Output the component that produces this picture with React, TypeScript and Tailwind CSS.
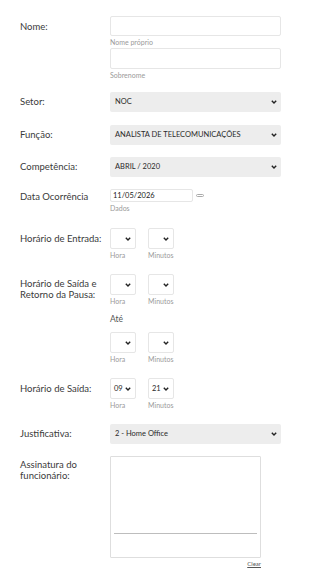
import React from "react";

const Chevron = () => (
  <svg width="6" height="4" viewBox="0 0 6 4" className="shrink-0">
    <path d="M0.8 0.8 L3 3 L5.2 0.8" fill="none" stroke="#222" strokeWidth="1.4" />
  </svg>
);

const Label = ({ children, pt = "pt-[5px]" }: { children: React.ReactNode; pt?: string }) => (
  <div className={`w-[110px] shrink-0 pl-[20px] pr-[6px] text-[9.5px] leading-[11px] text-[#3a3a3a] ${pt}`}>{children}</div>
);

const Caption = ({ children, className = "" }: { children: React.ReactNode; className?: string }) => (
  <div className={`text-[7px] leading-[10px] text-[#9a9a9a] ${className}`}>{children}</div>
);

const WideSelect = ({ value }: { value: string }) => (
  <div className="flex h-[20px] w-[171px] items-center justify-between rounded-[2px] bg-[#ededed] pl-[5px] pr-[4px] text-[7.5px] text-[#2a2a2a]">
    <span>{value}</span>
    <Chevron />
  </div>
);

const TimeSelect = ({ value = "" }: { value?: string }) => (
  <div className="flex h-[21px] w-[26px] items-center justify-between rounded-[2px] border border-[#e6e6e6] bg-white pl-[3px] pr-[4px] text-[7.5px] text-[#2a2a2a]">
    <span>{value}</span>
    <Chevron />
  </div>
);

const TimePair = ({ h = "", m = "" }: { h?: string; m?: string }) => (
  <div className="flex gap-[12px]">
    <div className="w-[26px]">
      <TimeSelect value={h} />
      <Caption className="mt-[1px]">Hora</Caption>
    </div>
    <div className="w-[26px]">
      <TimeSelect value={m} />
      <Caption className="mt-[1px]">Minutos</Caption>
    </div>
  </div>
);

export default function App() {
  return (
    <div className="min-h-[578px] w-[310px] bg-white pt-[16px]" style={{ fontFamily: "Lato, 'Noto Sans', sans-serif" }}>
      {/* Nome */}
      <div className="flex">
        <Label>Nome:</Label>
        <div className="w-[171px]">
          <div className="h-[20px] rounded-[2px] border border-[#e6e6e6]" />
          <Caption className="mt-[1px]">Nome próprio</Caption>
          <div className="mt-[1px] h-[21px] rounded-[2px] border border-[#e6e6e6]" />
          <Caption className="mt-[1px]">Sobrenome</Caption>
        </div>
      </div>

      {/* Setor */}
      <div className="mt-[12px] flex">
        <Label pt="pt-[4px]">Setor:</Label>
        <WideSelect value="NOC" />
      </div>
      <div className="mt-[13px] flex">
        <Label pt="pt-[4px]">Função:</Label>
        <WideSelect value="ANALISTA DE TELECOMUNICAÇÕES" />
      </div>
      <div className="mt-[12px] flex">
        <Label pt="pt-[4px]">Competência:</Label>
        <WideSelect value="ABRIL / 2020" />
      </div>

      {/* Data */}
      <div className="mt-[12px] flex">
        <Label pt="pt-[2px]">Data Ocorrência</Label>
        <div>
          <div className="flex items-center gap-[3px]">
            <div className="flex h-[13px] w-[83px] items-center rounded-[2px] border border-[#e6e6e6] pl-[2px] text-[7.5px] text-[#222]">
              11/05/2026
            </div>
            <div className="h-[3px] w-[8px] rounded-full border border-[#aaa]" />
          </div>
          <Caption className="mt-[1px]">Dados</Caption>
        </div>
      </div>

      {/* Entrada */}
      <div className="mt-[15px] flex">
        <Label pt="pt-[5px]">Horário de Entrada:</Label>
        <TimePair />
      </div>

      {/* Saída e Retorno */}
      <div className="mt-[14px] flex">
        <Label pt="pt-[4px]">Horário de Saída e Retorno da Pausa:</Label>
        <div>
          <TimePair />
          <div className="mt-[8px] text-[8.5px] leading-[10px] text-[#555]">Até</div>
          <div className="mt-[8px]">
            <TimePair />
          </div>
        </div>
      </div>

      {/* Saída */}
      <div className="mt-[14px] flex">
        <Label pt="pt-[5px]">Horário de Saída:</Label>
        <TimePair h="09" m="21" />
      </div>

      {/* Justificativa */}
      <div className="mt-[14px] flex">
        <Label pt="pt-[4px]">Justificativa:</Label>
        <WideSelect value="2 - Home Office" />
      </div>

      {/* Assinatura */}
      <div className="mt-[12px] flex">
        <Label pt="pt-[3px]">Assinatura do funcionário:</Label>
        <div className="w-[151px]">
          <div className="flex h-[102px] flex-col justify-end rounded-[1px] border border-[#dedede] px-[3px] pb-[23px]">
            <div className="h-px bg-[#bdbdbd]" />
          </div>
          <div className="mt-[2px] text-right text-[6px] leading-[8px] text-[#555] underline">Clear</div>
        </div>
      </div>
    </div>
  );
}
